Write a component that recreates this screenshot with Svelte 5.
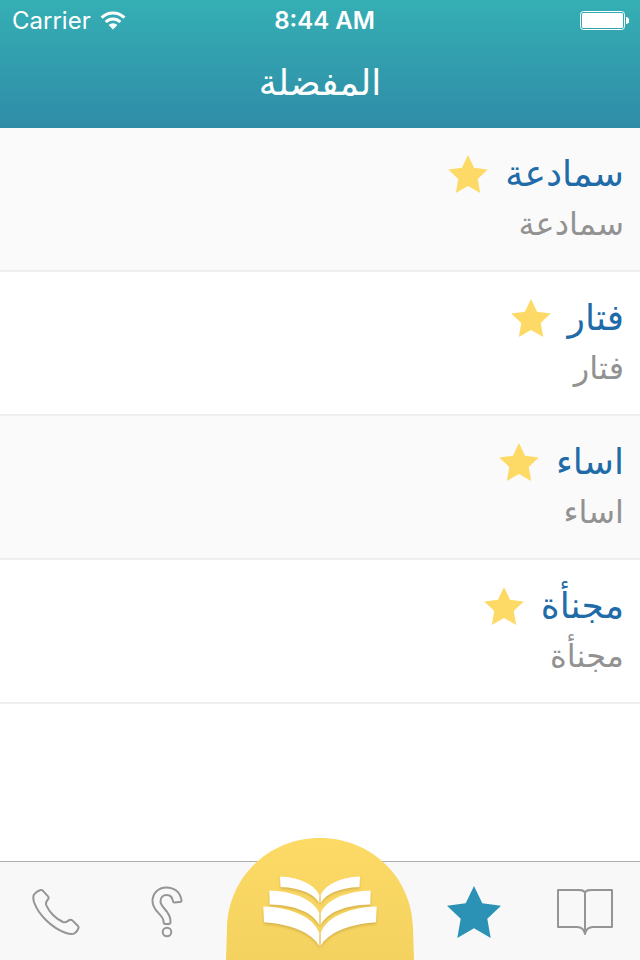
<script lang="ts">
  type Entry = { word: string; meaning: string }

  const entries: Entry[] = [
    { word: "سمادعة", meaning: "سمادعة" },
    { word: "فتار", meaning: "فتار" },
    { word: "اساء", meaning: "اساء" },
    { word: "مجنأة", meaning: "مجنأة" },
  ]

  const star = "27,0 35.3,17.3 54,19.7 40.3,32.7 43.7,52 27,42.3 10.3,52 13.7,32.7 0,19.7 18.7,17.3"
</script>

<div class="app" dir="rtl" lang="ar">
  <header>
    <div class="status" dir="ltr" lang="en">
      <div class="carrier">
        <span>Carrier</span>
        <svg width="26" height="19" viewBox="0 0 26 19" aria-hidden="true">
          <g fill="none" stroke="#fff" stroke-width="3">
            <path d="M1.6 6.6a16.2 16.2 0 0 1 22.8 0" />
            <path d="M5.7 11a10.4 10.4 0 0 1 14.6 0" />
          </g>
          <path d="M8.6 14a6.3 6.3 0 0 1 8.8 0L13 18.6z" fill="#fff" />
        </svg>
      </div>
      <time>8:44 AM</time>
      <svg class="battery" width="49" height="19" viewBox="0 0 49 19" aria-hidden="true">
        <rect x=".5" y=".5" width="44" height="18" rx="3" fill="none" stroke="#fff" />
        <rect x="2" y="2" width="41" height="15" rx="1.5" fill="#fff" />
        <path d="M46 6a3.3 3.5 0 0 1 0 7z" fill="#fff" />
      </svg>
    </div>
    <h1>المفضلة</h1>
  </header>

  <main>
    <ul>
      {#each entries as entry}
        <li>
          <div class="top">
            <h2>{entry.word}</h2>
            <svg width="40" height="38" viewBox="0 0 54 52" aria-hidden="true">
              <polygon points={star} />
            </svg>
          </div>
          <p>{entry.meaning}</p>
        </li>
      {/each}
    </ul>
  </main>

  <nav>
    <button aria-label="القاموس">
      <svg class="line" width="58" height="48" viewBox="0 0 58 48">
        <path d="M29 4.500C27.500 2 25.500 2 22 2H2v37h19c4.500 0 7 2 8 7 1-5 3.500-7 8-7h19V2H36c-3.500 0-5.500 0-7 2.500V45" />
      </svg>
    </button>
    <button class="active" aria-label="المفضلة">
      <svg width="54" height="52" viewBox="0 0 54 52"><polygon points={star} /></svg>
    </button>
    <button class="home" aria-label="الرئيسية">
      <svg width="188" height="122" viewBox="0 0 188 122">
        <defs>
          <linearGradient id="dome" x1="0" y1="0" x2="0" y2="1">
            <stop offset="0" stop-color="#fdda66" />
            <stop offset="1" stop-color="#f4d25f" />
          </linearGradient>
        </defs>
        <path d="M0 122 1 90C2 39 43 0 94 0s92 39 93 90l1 32z" fill="url(#dome)" />
        <g class="pages">
          <path id="leaf-top" d="M54 38.500C70 39 88 45 93.300 57v8C88 56 76 50 54.500 49z" />
          <path id="leaf-mid" d="M43.300 52.500C64 53 87 60 93.300 75v12C87 75 70 67 43.700 66.500z" />
          <path id="leaf-low" d="M37.300 68.500C60 69 87 77 93.300 95v13C86 95 66 86 38 84.200z" />
          <g transform="matrix(-1 0 0 1 188 0)">
            <use href="#leaf-top" />
            <use href="#leaf-mid" />
            <use href="#leaf-low" />
          </g>
        </g>
      </svg>
    </button>
    <button aria-label="مساعدة">
      <svg class="line" width="32" height="52" viewBox="0 0 32 52">
        <path d="M30.500 14.500C29.500 6 23 1.500 15.500 1.500 7 1.500 1.500 7.500 1.500 15c0 11 11 13 11 20.500 0 2 .5 2.500 2 2.500h3c1.500 0 2-.5 2-2.500 0-11-10-13.500-10-20 0-4 2.500-6.500 6-6.500 4 0 6 2 6.500 6.500.2.800.5 1 1.500 1l5-.5c1.500 0 2-.5 2-1.500z" />
        <circle cx="16" cy="46" r="4.300" />
      </svg>
    </button>
    <button aria-label="اتصل بنا">
      <svg class="line" width="48" height="48" viewBox="0 0 48 48">
        <path d="M2 6.500C4 4 6.500 2.500 8.500 2c1-.2 1.700 0 2.500.8l5 5.500c.8.900.8 1.700.2 2.700-1 1.700-3 3-2 6C17 24 24 31 31 34c3 1 4.500-1 6.500-2 1-.5 2-.4 2.800.4l5.500 5.400c.8.800 1 1.600.6 2.600-.6 1.700-1.600 3.200-3.400 4.600-1.400 1.100-5 1.400-9 0C19 39.500 6 26 2 14c-1-3.500-.8-6 0-7.500z" />
      </svg>
    </button>
  </nav>
</div>

<style>
  :global(body) {
    margin: 0;
    background: #fff;
  }

  .app {
    display: flex;
    flex-direction: column;
    min-height: 100vh;
    font-family: "DejaVu Sans", sans-serif;
  }

  header {
    background: linear-gradient(#35afb4, #2f8ca8);
    color: #fff;
  }

  .status {
    display: grid;
    grid-template-columns: 1fr auto 1fr;
    align-items: center;
    height: 41px;
    padding: 0 11px 0 12px;
    font-family: Inter, sans-serif;
    font-size: 24px;
  }

  .carrier {
    display: flex;
    align-items: center;
    gap: 9px;
  }

  time {
    padding-left: 8px;
    font-weight: 600;
  }

  .battery {
    justify-self: end;
  }

  h1 {
    margin: 0;
    height: 87px;
    font-size: 36px;
    font-weight: 400;
    line-height: 84px;
    text-align: center;
  }

  main {
    flex: 1;
  }

  ul {
    margin: 0;
    padding: 0;
    list-style: none;
  }

  li {
    padding: 24px 16px;
    border-bottom: 2px solid #efeff0;
  }

  li:nth-child(odd) {
    background: #fafafa;
  }

  .top {
    display: flex;
    align-items: center;
    gap: 17px;
    height: 44px;
  }

  .top svg {
    fill: #fdda66;
  }

  h2 {
    margin: 0;
    color: #206ba8;
    font-size: 36px;
    font-weight: 400;
    line-height: 40px;
  }

  p {
    margin: 6px 0 0;
    color: #929292;
    font-size: 32px;
    line-height: 44px;
  }

  nav {
    display: grid;
    grid-template-columns: 1fr 1fr 196px 1fr 1fr;
    height: 98px;
    border-top: 1px solid #aeaeae;
    background: #f8f8f8;
  }

  button {
    display: flex;
    align-items: center;
    justify-content: center;
    padding: 2px 0 0;
    border: 0;
    background: none;
    cursor: pointer;
  }

  .line {
    fill: none;
    stroke: #959595;
    stroke-width: 2;
    stroke-linejoin: round;
  }

  .active {
    fill: #2b92b5;
  }

  .home {
    align-items: flex-end;
    margin-top: -24px;
    padding: 0;
  }

  .pages {
    fill: #fff;
    filter: drop-shadow(0 2px 1px #d9b64e);
  }
</style>
